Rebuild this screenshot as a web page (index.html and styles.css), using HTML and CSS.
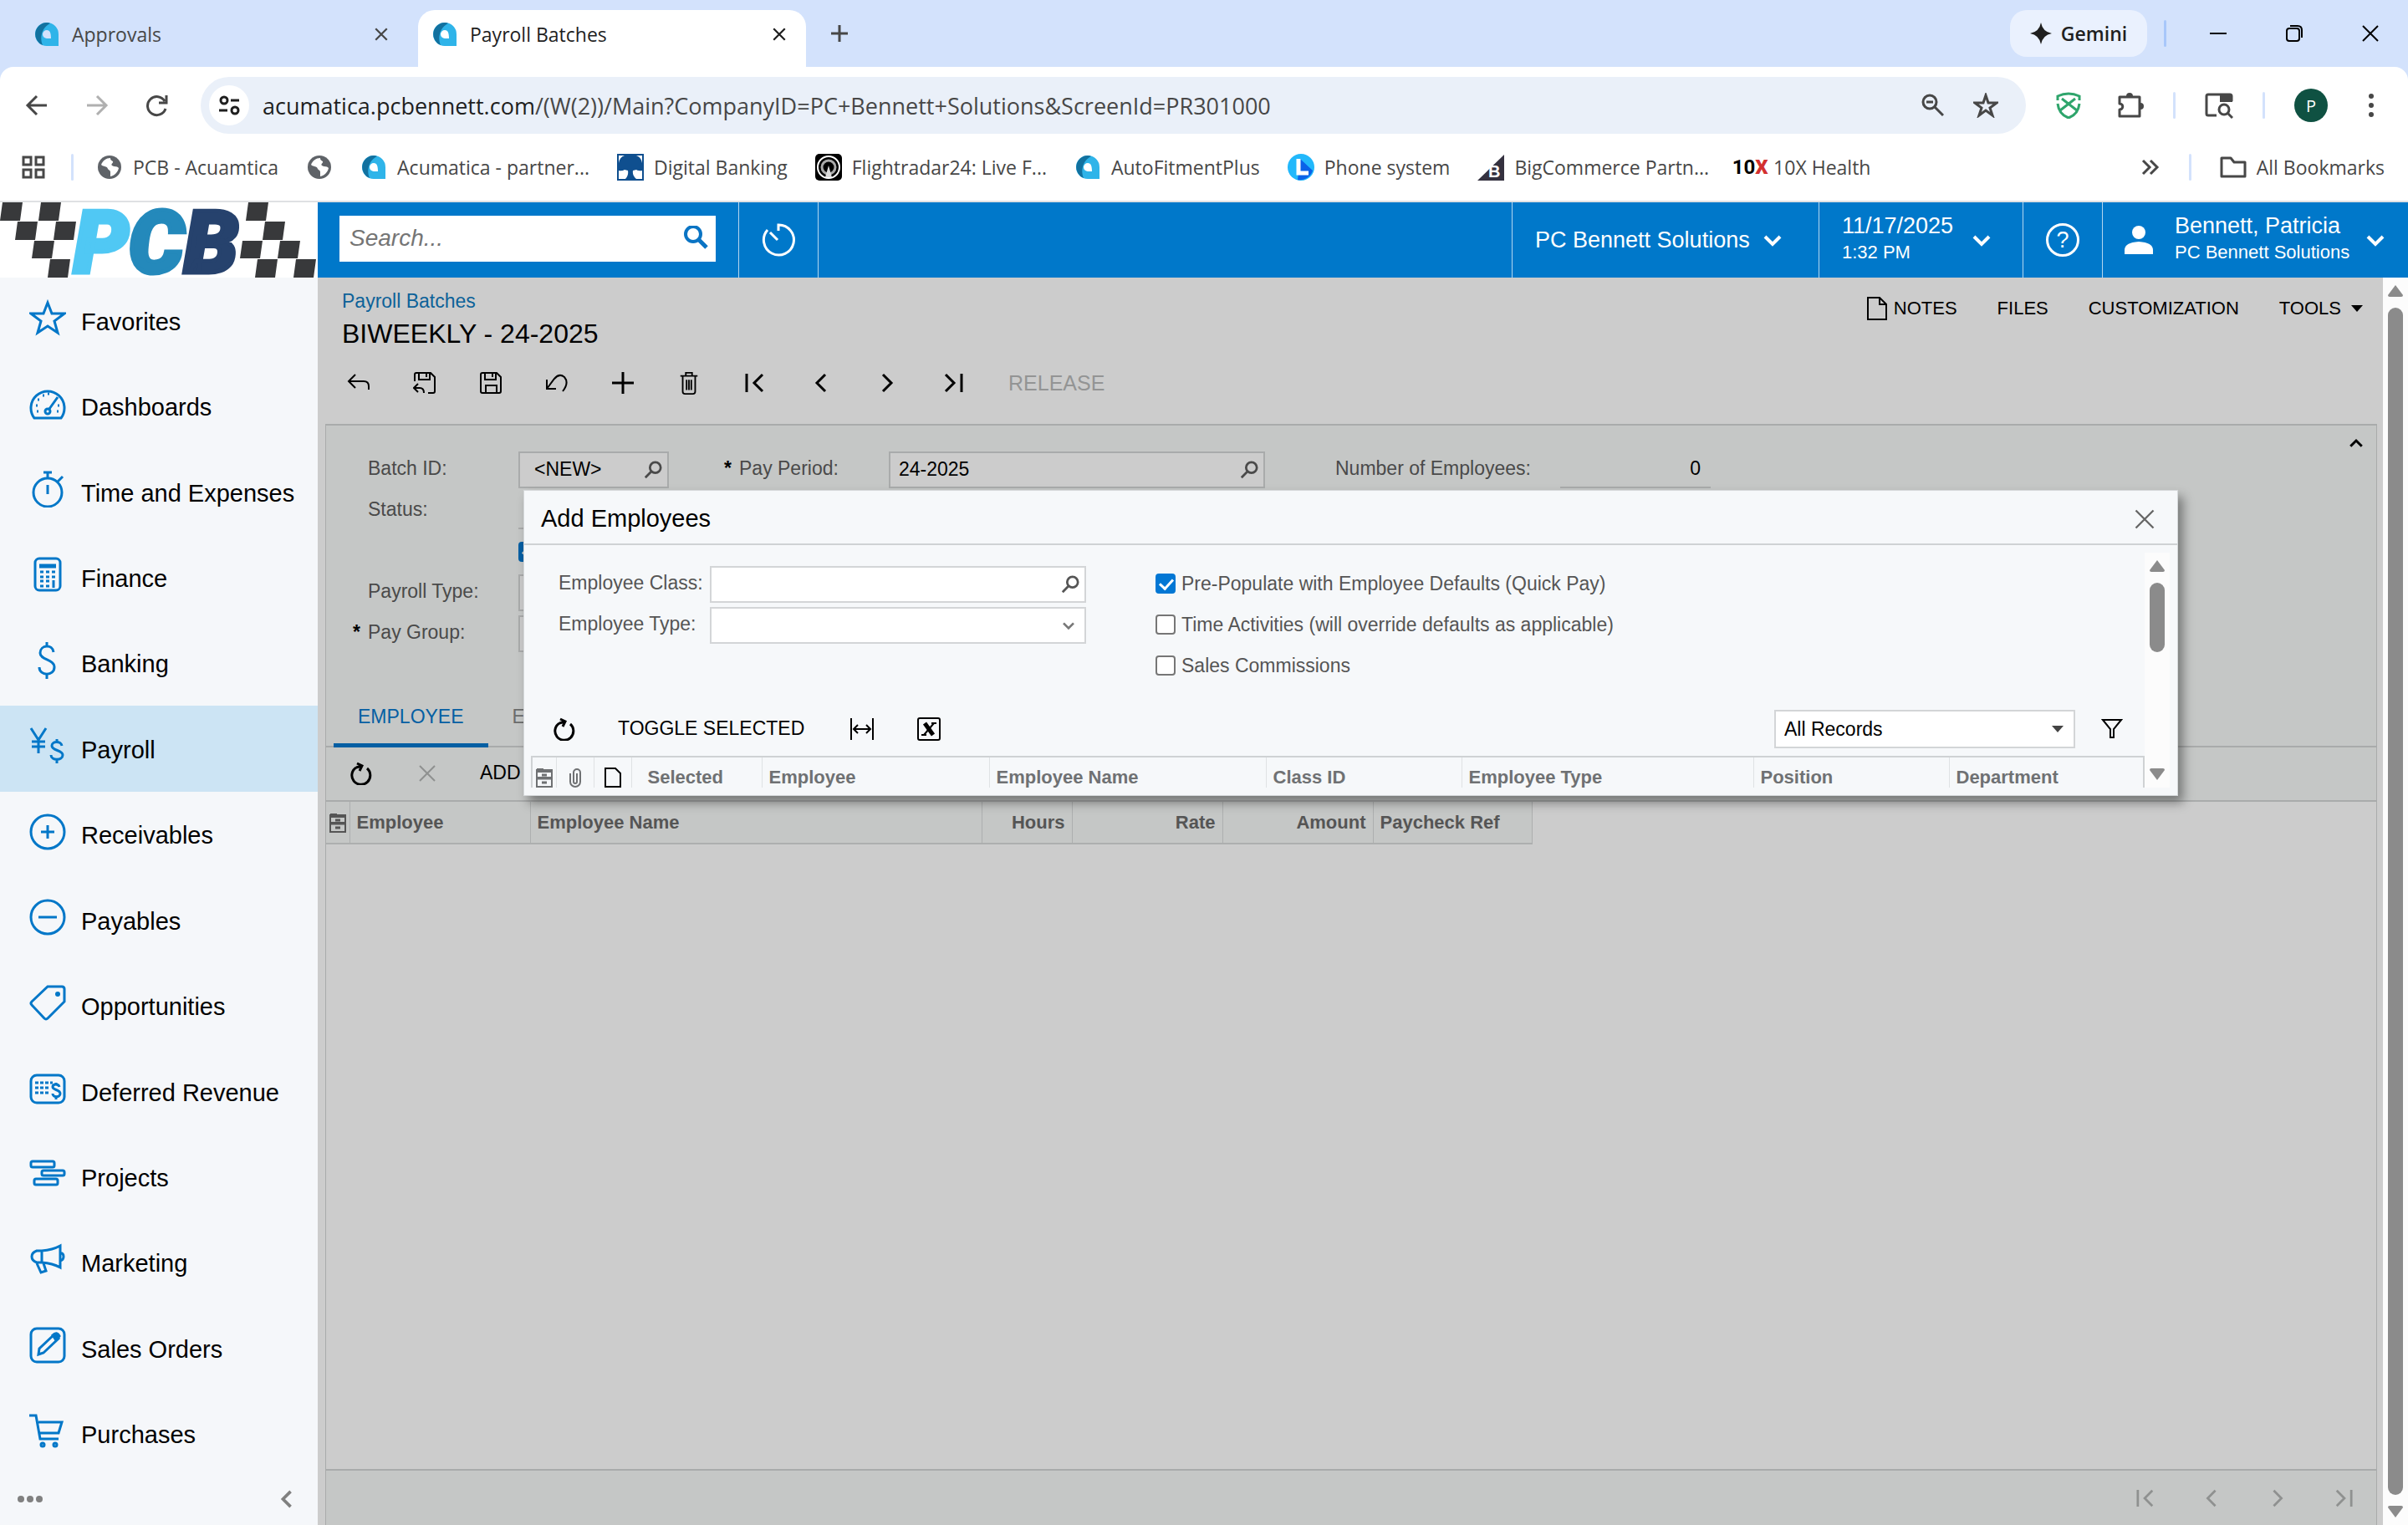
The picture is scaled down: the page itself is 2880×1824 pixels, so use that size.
FILE: index.html
```html
<!DOCTYPE html>
<html lang="en">
<head>
	<meta charset="utf-8">
	<title>Payroll Batches</title>
	<link rel="stylesheet" href="styles.css">
</head>
<body>
	<!-- shared icons -->
	<svg class="defs" width="0" height="0">
		<symbol id="acu" viewBox="0 0 28 28"><path d="M14 0A14 14 0 0 0 14 28H28V14A14 14 0 0 0 14 0ZM14 9c4 0 5 4 5 10h-5a5 5 0 0 1 0-10z" fill="#2fb4e9" fill-rule="evenodd"/><path d="M14 0A14 14 0 0 0 9 27c-4-9-1-21 9-26a14 14 0 0 0-4-1z" fill="#12719f"/></symbol>
		<symbol id="globe" viewBox="0 0 28 28"><circle cx="14" cy="14" r="14" fill="#5f6368"/><path d="M15 3c-5 0-9 3-11 8 3 3 7 1 8 5 1 2 3 1 3 4v5c5-1 9-5 10-10-3-3-5-1-8-3-2-2 2-3 1-5-1-1-3-1-3-4z" fill="#fff"/></symbol>
		<symbol id="x" viewBox="0 0 24 24"><path d="M3 3l18 18M21 3L3 21"/></symbol>
		<symbol id="down" viewBox="0 0 24 24"><path d="M3 8l9 9 9-9"/></symbol>
		<symbol id="prev" viewBox="0 0 24 24"><path d="M17 2L7 12l10 10"/></symbol>
		<symbol id="next" viewBox="0 0 24 24"><path d="M7 2l10 10L7 22"/></symbol>
		<symbol id="first" viewBox="0 0 24 24"><path d="M2 1v22M21 2L11 12l10 10"/></symbol>
		<symbol id="last" viewBox="0 0 24 24"><path d="M22 1v22M3 2l10 10L3 22"/></symbol>
		<symbol id="refresh" viewBox="0 0 28 28"><path d="M8 7a11 11 0 1 0 13 1M9 2l6 3-3 6M8 7l7-2"/></symbol>
		<symbol id="find" viewBox="0 0 24 24"><circle cx="15" cy="9" r="7"/><path d="M10 14l-8 8"/></symbol>
		<symbol id="drawer" viewBox="0 0 20 24"><path d="M1 3h18v20H1zM1 12h18"/><path d="M1 1h8v2h10v3H1z" fill="currentColor" stroke="none"/><path d="M7 9h6M7 18h6M1 13h18" stroke-width="3"/></symbol>
		<symbol id="dollar" viewBox="0 0 44 44"><path d="M29 12c-1-10-16-9-16 1 0 9 17 7 17 17 0 11-18 11-18 0M21 0v5M21 38v6"/></symbol>
		<symbol id="tri-up" viewBox="0 0 18 14"><path d="M9 0L18 12q0 2-2 2H2q-2 0-2-2z" fill="#8b8b8b"/></symbol>
		<symbol id="tri-down" viewBox="0 0 18 14"><path d="M9 14L18 2q0-2-2-2H2q-2 0-2 2z" fill="#8b8b8b"/></symbol>
	</svg>

	<div class="browser">
		<div class="tab-strip">
			<div class="tab">
				<svg class="fav"><use href="#acu"/></svg>
				<span class="tab-name">Approvals</span>
				<button class="tab-close" aria-label="Close tab"><svg class="i18"><use href="#x"/></svg></button>
			</div>
			<div class="tab active">
				<svg class="fav"><use href="#acu"/></svg>
				<span class="tab-name">Payroll Batches</span>
				<button class="tab-close" aria-label="Close tab"><svg class="i18"><use href="#x"/></svg></button>
			</div>
			<button class="new-tab" aria-label="New tab"><svg class="i24" viewBox="0 0 24 24"><path d="M12 2v20M2 12h20"/></svg></button>
			<button class="gemini"><svg viewBox="0 0 26 26"><path d="M13 0q2 11 13 13-11 2-13 13Q11 15 0 13 11 11 13 0z" fill="#1f1f1f" stroke="none"/></svg>Gemini</button>
			<span class="bar strong"></span>
			<div class="win-buttons">
				<button aria-label="Minimize"><svg class="i24 thin" viewBox="0 0 24 24"><path d="M2 12h20"/></svg></button>
				<button aria-label="Restore"><svg class="i24 thin" viewBox="0 0 24 24"><rect x="3" y="6" width="15" height="15" rx="3"/><path d="M7 3h9q5 0 5 5v9"/></svg></button>
				<button aria-label="Close"><svg class="i24 thin"><use href="#x"/></svg></button>
			</div>
		</div>

		<div class="address-row">
			<button class="nav" aria-label="Back"><svg class="i28" viewBox="0 0 28 28"><path d="M26 14H4M14 3L3 14l11 11"/></svg></button>
			<button class="nav off" aria-label="Forward"><svg class="i28" viewBox="0 0 28 28"><path d="M2 14h22M14 3l11 11-11 11"/></svg></button>
			<button class="nav" aria-label="Reload"><svg class="i28" viewBox="0 0 28 28"><path d="M24 18a11 11 0 1 1-1-9M25 2v9h-9"/></svg></button>
			<div class="omnibox">
				<span class="site-info"><svg class="i28" viewBox="0 0 28 28"><circle cx="8" cy="8" r="4"/><path d="M16 8h10M2 20h10"/><circle cx="21" cy="20" r="4"/></svg></span>
				<a class="url" href="#"><span>acumatica.pcbennett.com</span>/(W(2))/Main?CompanyID=PC+Bennett+Solutions&amp;ScreenId=PR301000</a>
				<button class="omni-btn" aria-label="Zoom"><svg class="i28" viewBox="0 0 28 28"><circle cx="11" cy="10" r="8"/><path d="M17 16l10 10M7 10h8"/></svg></button>
				<button class="omni-btn" aria-label="Bookmark"><svg class="i30" viewBox="0 0 30 30"><path d="M15 3l3 9h10l-8 6 3 9-8-6-8 6 3-9-8-6h10z"/></svg></button>
			</div>
			<div class="extensions">
				<button class="shield" aria-label="Shield"><svg class="i32" viewBox="0 0 32 32"><path d="M3 10V5q13-6 26 0v5M3 14c1 9 5 14 13 17 8-3 12-8 13-17M8 8l18 14M24 8L6 22"/></svg></button>
				<button aria-label="Extensions"><svg class="i32" viewBox="0 0 32 32"><path d="M3 6h24v23H3v-8c5 0 5-7 0-7z" stroke-linejoin="round"/><path d="M11 5a4 4 0 0 1 8 0zM28 13a4 4 0 0 1 0 8z" fill="currentColor" stroke="none"/></svg></button>
				<span class="bar"></span>
				<button aria-label="Lens"><svg class="i34" viewBox="0 0 34 34"><path d="M14 29H4q-2 0-2-2V6q0-2 2-2h26q2 0 2 2v6"/><path d="M18 4h15v9H18z" fill="currentColor" stroke="none"/><circle cx="23" cy="22" r="6"/><path d="M27 26l6 6"/></svg></button>
				<span class="bar"></span>
				<button class="avatar">P</button>
				<button class="dots" aria-label="Menu"><svg viewBox="0 0 8 30"><circle cx="4" cy="4" r="3"/><circle cx="4" cy="15" r="3"/><circle cx="4" cy="26" r="3"/></svg></button>
			</div>
		</div>

		<div class="bookmarks">
			<svg class="apps" viewBox="0 0 28 28"><path d="M2 2h9v9H2zM17 2h9v9h-9zM2 17h9v9H2zM17 17h9v9h-9z"/></svg>
			<span class="bar"></span>
			<a href="#"><svg class="fav"><use href="#globe"/></svg>PCB - Acuamtica</a>
			<a href="#" aria-label="Bookmark"><svg class="fav"><use href="#globe"/></svg></a>
			<a href="#"><svg class="fav"><use href="#acu"/></svg>Acumatica - partner...</a>
			<a href="#"><svg class="fav32" viewBox="0 0 32 32"><path d="M0 0h32v32H0z" fill="#0f4f8f"/><path d="M2 20q4 1 7-1l4 1q1 6-3 10H2zM30 20q-4 1-7-1l-4 1q-1 6 4 10h7zM2 2h7Q3 4 2 11zM30 2v9q-1-7-7-9z" fill="#fff"/></svg>Digital Banking</a>
			<a href="#"><svg class="fav32" viewBox="0 0 32 32"><rect width="32" height="32" rx="5" fill="#000"/><circle cx="16" cy="16" r="13" fill="none" stroke="#fff" stroke-width="2"/><circle cx="16" cy="16" r="8" fill="none" stroke="#aaa" stroke-width="3"/><path d="M16 14l4 14h-8z" fill="#ddd"/></svg>Flightradar24: Live F...</a>
			<a href="#"><svg class="fav"><use href="#acu"/></svg>AutoFitmentPlus</a>
			<a href="#"><svg class="fav32" viewBox="0 0 32 32"><circle cx="16" cy="16" r="16" fill="#22b8fb"/><path d="M15 6l15 14A16 16 0 0 1 12 31z" fill="#0a62e8"/><path d="M13 6v17h12" fill="none" stroke="#fff" stroke-width="5"/></svg>Phone system</a>
			<a href="#"><svg class="fav32" viewBox="0 0 32 32"><path d="M32 1v31H0z" fill="#34313f"/><text x="13" y="28" class="bc-mark">B</text></svg>BigCommerce Partn...</a>
			<a href="#"><span class="ten">10<b>X</b></span>10X Health</a>
			<div class="bookmarks-end">
				<button aria-label="More bookmarks"><svg class="i24" viewBox="0 0 24 24"><path d="M3 4l8 8-8 8M12 4l8 8-8 8"/></svg></button>
				<span class="bar"></span>
				<a href="#"><svg class="fav32 line" viewBox="0 0 32 32"><path d="M2 5h11l4 5h13v17H2z" stroke-linejoin="round"/></svg>All Bookmarks</a>
			</div>
		</div>
	</div>

	<div class="app">
		<aside class="sidebar">
			<svg class="logo" viewBox="0 0 380 90">
				<path fill="#38393b" d="M3 0h24l-3 22H0zM49 0h24l-3 22H46zM21 23h24l-3 22H18zM67 23h24l-3 22H64zM41 46h24l-3 21H38zM60 68h24l-3 22H57zM297 0h24l-3 22h-24zM317 23h24l-3 22h-24zM290 46h24l-3 21h-24zM335 46h24l-3 21h-24zM308 68h24l-3 22h-24zM354 68h24l-3 22h-24z"/>
				<text x="88" y="84" class="logo-text"><tspan class="logo-p">P</tspan><tspan class="logo-c">C</tspan><tspan class="logo-b">B</tspan></text>
			</svg>
			<nav class="menu">
				<a href="#"><svg viewBox="0 0 44 44"><path d="M22 4l5 13h15l-12 9 4 14-12-8-12 8 4-14-12-9h15z"/></svg>Favorites</a>
				<a href="#"><svg viewBox="0 0 44 44"><path d="M6 39A20 20 0 1 1 38 39zM6 39h32M24 28l10-14"/><circle cx="22" cy="31" r="3"/><path d="M9 31h2M8 24h2M10 17h2M16 12h2M22 10h2M33 31h2M34 24h2"/></svg>Dashboards</a>
				<a href="#"><svg viewBox="0 0 44 44"><circle cx="22" cy="26" r="17"/><path d="M22 17v11M22 3v6M17 2h10M34 13l6-6"/></svg>Time and Expenses</a>
				<a href="#"><svg viewBox="0 0 44 44"><rect x="7" y="3" width="30" height="38" rx="5"/><path d="M12 12h20" stroke-width="5"/><path d="M13 19h4M20 19h4M27 19h4M13 25h4M20 25h4M27 25h4M13 30h4M20 30h4M13 36h4M20 36h4M29 29v9"/></svg>Finance</a>
				<a href="#"><svg><use href="#dollar"/></svg>Banking</a>
				<a href="#" class="current"><svg viewBox="0 0 44 44"><path d="M2 1l9 14L20 1M11 15v16M3 17h16M3 23h16"/><path d="M39 22c-1-6-12-6-12 0 0 6 13 5 13 11 0 7-14 7-14 0M33 14v4M33 38v5"/></svg>Payroll</a>
				<a href="#"><svg viewBox="0 0 44 44"><circle cx="22" cy="22" r="20"/><path d="M22 14v16M14 22h16"/></svg>Receivables</a>
				<a href="#"><svg viewBox="0 0 44 44"><circle cx="22" cy="22" r="20"/><path d="M11 22h22"/></svg>Payables</a>
				<a href="#"><svg viewBox="0 0 44 44"><path d="M22 2h17q3 0 3 3v15L22 40q-2 2-4 0L3 24q-2-2 0-4z"/><circle cx="34" cy="11" r="3" fill="#0277c8" stroke="none"/></svg>Opportunities</a>
				<a href="#"><svg viewBox="0 0 44 44"><rect x="2" y="6" width="40" height="33" rx="7"/><path d="M7 15h4M13 15h4M19 15h4M25 15h3M7 21h4M13 21h4M19 21h4M7 27h4M13 27h4M19 27h4"/><path d="M36 20c-1-4-8-4-8 0 0 4 9 3 9 8 0 5-9 5-9 0M32 15v3M32 31v4"/></svg>Deferred Revenue</a>
				<a href="#"><svg viewBox="0 0 44 44"><rect x="2" y="7" width="28" height="7" rx="2"/><rect x="15" y="18" width="27" height="6" rx="2"/><rect x="6" y="28" width="28" height="7" rx="2"/></svg>Projects</a>
				<a href="#"><svg viewBox="0 0 44 44"><path d="M15 11H9q-6 2-6 7t6 7h6zM15 11q13-1 22-6v26q-9-5-22-6zM37 13q4 1 4 5t-4 5M9 26l5 11 6-2-3-9"/></svg>Marketing</a>
				<a href="#"><svg viewBox="0 0 44 44"><rect x="2" y="2" width="40" height="40" rx="7"/><path d="M11 33l1-7 18-17 5 5-18 17z"/><path d="M28 10q5-5 8 1l-4 5z" fill="#0277c8"/></svg>Sales Orders</a>
				<a href="#"><svg viewBox="0 0 44 44"><path d="M0 3h8l5 28h22M11 11h28l-4 13H13"/><circle cx="16" cy="38" r="2"/><circle cx="31" cy="38" r="2"/></svg>Purchases</a>
			</nav>
			<div class="sidebar-foot">
				<button aria-label="More items"><svg class="more" viewBox="0 0 30 8"><circle cx="4" cy="4" r="4"/><circle cx="15" cy="4" r="4"/><circle cx="26" cy="4" r="4"/></svg></button>
				<button aria-label="Collapse menu"><svg class="i22 bold"><use href="#prev"/></svg></button>
			</div>
		</aside>

		<div class="content">
			<header class="top-bar">
				<div class="search">
					<input type="search" placeholder="Search..." aria-label="Search">
					<svg class="i30" viewBox="0 0 30 30"><circle cx="11" cy="10" r="9"/><path d="M18 17l9 9" stroke-width="5"/></svg>
				</div>
				<button class="top-cell timer" aria-label="Recent"><svg viewBox="0 0 40 40"><path d="M7 8A18 18 0 1 0 20 2v7M10 11l9 9"/></svg></button>
				<button class="top-cell company">PC Bennett Solutions<svg class="i24"><use href="#down"/></svg></button>
				<button class="top-cell date"><span>11/17/2025<small>1:32 PM</small></span><svg class="i24"><use href="#down"/></svg></button>
				<button class="top-cell help" aria-label="Help"><span>?</span></button>
				<button class="top-cell user"><svg class="person" viewBox="0 0 34 34"><circle cx="17" cy="8" r="8"/><path d="M0 34v-5q0-9 17-10 17 1 17 10v5z"/></svg><span>Bennett, Patricia<small>PC Bennett Solutions</small></span><svg class="i24"><use href="#down"/></svg></button>
			</header>

			<div class="stage">
				<main class="page">
					<div class="page-head">
						<div>
							<a class="crumb" href="#">Payroll Batches</a>
							<h1>BIWEEKLY - 24-2025</h1>
						</div>
						<div class="page-links">
							<button><svg viewBox="0 0 24 28"><path d="M1 1h14l8 8v18H1zM15 1v8h8"/></svg>NOTES</button>
							<button>FILES</button>
							<button>CUSTOMIZATION</button>
							<button>TOOLS<i class="caret"></i></button>
						</div>
					</div>

					<div class="toolbar">
						<button aria-label="Back"><svg class="i28" viewBox="0 0 28 28"><path d="M10 4l-8 8 8 8M2 12h18q6 0 6 6v4"/></svg></button>
						<button aria-label="Save and close"><svg class="i28" viewBox="0 0 28 28"><path d="M2 12V4q0-2 2-2h17l5 5v17q0 2-2 2h-6M7 2v8h13V2M16 3v4M6 15l-5 5 5 5M1 20h7q5 0 5 6"/></svg></button>
						<button aria-label="Save"><svg class="i28" viewBox="0 0 28 28"><path d="M2 4q0-2 2-2h17l5 5v17q0 2-2 2H4q-2 0-2-2zM7 2v8h13V2M16 3v4M8 26v-9h13v9"/></svg></button>
						<button aria-label="Undo"><svg class="i28" viewBox="0 0 28 28"><path d="M2 10v11h11M2 21L11 9q6-7 12-2 6 7-2 17"/></svg></button>
						<button aria-label="Add"><svg class="i28 mid" viewBox="0 0 28 28"><path d="M14 1v26M1 14h26"/></svg></button>
						<button aria-label="Delete"><svg class="i28" viewBox="0 0 24 30"><path d="M1 6h22M8 5V2h8v3M4 7v19q0 3 3 3h10q3 0 3-3V7M9 11v13M12 11v13M15 11v13"/></svg></button>
						<button aria-label="First"><svg class="i24 mid"><use href="#first"/></svg></button>
						<button aria-label="Previous"><svg class="i24 mid"><use href="#prev"/></svg></button>
						<button aria-label="Next"><svg class="i24 mid"><use href="#next"/></svg></button>
						<button aria-label="Last"><svg class="i24 mid"><use href="#last"/></svg></button>
						<button class="release" disabled>RELEASE</button>
					</div>

					<section class="panel">
						<div class="form">
							<div class="form-col first-col">
								<label for="batch">Batch ID:</label>
								<div class="field"><input id="batch" type="text" value="&lt;NEW&gt;"><svg class="i22"><use href="#find"/></svg></div>
								<label for="status">Status:</label>
								<input id="status" class="flat" type="text">
								<span></span>
								<input class="check dim" type="checkbox" checked aria-label="Hold">
								<label for="ptype">Payroll Type:</label>
								<div class="field"><input id="ptype" type="text"></div>
								<label for="pgroup"><b>*</b>Pay Group:</label>
								<div class="field"><input id="pgroup" type="text"></div>
							</div>
							<div class="form-col second-col">
								<label for="period"><b>*</b>Pay Period:</label>
								<div class="field"><input id="period" type="text" value="24-2025"><svg class="i22"><use href="#find"/></svg></div>
							</div>
							<div class="form-col third-col">
								<label for="count">Number of Employees:</label>
								<input id="count" class="flat" type="text" value="0">
							</div>
							<button class="collapse" aria-label="Collapse form"><svg class="i18 bold" viewBox="0 0 24 24"><path d="M3 17l9-9 9 9"/></svg></button>
						</div>

						<div class="tabs">
							<button class="selected">EMPLOYEE</button>
							<button>EARN</button>
						</div>

						<div class="grid-tools">
							<button aria-label="Refresh"><svg class="i28 mid"><use href="#refresh"/></svg></button>
							<button disabled aria-label="Delete row"><svg class="i24"><use href="#x"/></svg></button>
							<button class="text-btn">ADD</button>
						</div>

						<table class="grid batch-grid">
							<colgroup><col class="w28"><col class="w216"><col class="w540"><col class="w108"><col class="w180"><col class="w180"><col class="w190"></colgroup>
							<tr>
								<th class="icon-col"><svg><use href="#drawer"/></svg></th>
								<th>Employee</th>
								<th>Employee Name</th>
								<th class="num">Hours</th>
								<th class="num">Rate</th>
								<th class="num">Amount</th>
								<th>Paycheck Ref</th>
							</tr>
						</table>

						<div class="pager">
							<button disabled aria-label="First page"><svg class="i22 mid"><use href="#first"/></svg></button>
							<button disabled aria-label="Previous page"><svg class="i22 mid"><use href="#prev"/></svg></button>
							<button disabled aria-label="Next page"><svg class="i22 mid"><use href="#next"/></svg></button>
							<button disabled aria-label="Last page"><svg class="i22 mid"><use href="#last"/></svg></button>
						</div>
					</section>
				</main>

				<div class="scroll page-scroll"><svg><use href="#tri-up"/></svg><i></i><svg><use href="#tri-down"/></svg></div>

				<div class="dialog" role="dialog" aria-labelledby="dlg-title">
					<div class="dialog-head">
						<h2 id="dlg-title">Add Employees</h2>
						<button aria-label="Close"><svg class="i28"><use href="#x"/></svg></button>
					</div>
					<div class="dialog-body">
						<div class="dialog-main">
							<div class="filters">
								<div class="filter-fields">
									<label for="eclass">Employee Class:</label>
									<div class="field white"><input id="eclass" type="text"><svg class="i22"><use href="#find"/></svg></div>
									<label for="etype">Employee Type:</label>
									<div class="field white"><select id="etype"><option></option></select><svg class="arrow"><use href="#down"/></svg></div>
								</div>
								<div class="filter-checks">
									<label><input class="check" type="checkbox" checked>Pre-Populate with Employee Defaults (Quick Pay)</label>
									<label><input class="check" type="checkbox">Time Activities (will override defaults as applicable)</label>
									<label><input class="check" type="checkbox">Sales Commissions</label>
								</div>
							</div>
							<div class="dialog-tools">
								<button aria-label="Refresh"><svg class="i28 mid"><use href="#refresh"/></svg></button>
								<button class="text-btn">TOGGLE SELECTED</button>
								<button aria-label="Fit columns"><svg class="i28" viewBox="0 0 28 28"><path d="M1 1v26M27 1v26M4 14h20M9 9l-5 5 5 5M19 9l5 5-5 5"/></svg></button>
								<button aria-label="Export to Excel"><svg class="i28" viewBox="0 0 28 28"><rect x="1" y="1" width="26" height="26" rx="2"/><path d="M9 7l10 14" stroke-width="5"/><path d="M20 7L8 21M17 7h6M5 21h6"/></svg></button>
								<div class="field white records"><select aria-label="Records"><option>All Records</option></select><i class="caret"></i></div>
								<button class="funnel" aria-label="Filter"><svg viewBox="0 0 26 24"><path d="M2 1h22l-9 11v10h-4V12z"/></svg></button>
							</div>
							<table class="grid dialog-grid">
								<colgroup><col class="w29"><col class="w45"><col class="w45"><col class="w156"><col class="w272"><col class="w331"><col class="w234"><col class="w349"><col class="w234"><col></colgroup>
								<tr>
									<th class="icon-col"><svg><use href="#drawer"/></svg></th>
									<th class="icon-col"><svg viewBox="0 0 20 24"><path d="M4 7v10a6 6 0 0 0 12 0V6a4 4 0 0 0-8 0v11a2 2 0 0 0 4 0V7"/></svg></th>
									<th class="icon-col"><svg class="dark" viewBox="0 0 20 24"><path d="M1 1h12l6 6v16H1z"/></svg></th>
									<th class="inset">Selected</th>
									<th>Employee</th>
									<th>Employee Name</th>
									<th>Class ID</th>
									<th>Employee Type</th>
									<th>Position</th>
									<th>Department</th>
								</tr>
							</table>
						</div>
						<div class="scroll dialog-scroll"><svg><use href="#tri-up"/></svg><i></i><svg><use href="#tri-down"/></svg></div>
					</div>
				</div>
			</div>
		</div>
	</div>
</body>
</html>
```
FILE: styles.css
```css
* {
	box-sizing: border-box;
}

body {
	margin: 0;
	height: 100vh;
	display: flex;
	flex-direction: column;
	overflow: hidden;
	font-family: "Liberation Sans", Arial, sans-serif;
	font-size: 23px;
	color: #000;
}

button, input, select {
	font: inherit;
	color: inherit;
	background: none;
	border: none;
	padding: 0;
	margin: 0;
	outline: none;
}

button {
	display: flex;
	align-items: center;
	justify-content: center;
	white-space: nowrap;
	cursor: pointer;
}

a {
	color: inherit;
	text-decoration: none;
}

svg {
	flex: none;
	fill: none;
	stroke: currentColor;
	stroke-width: 2;
}

.defs {
	position: absolute;
}

#acu, #globe, #tri-up, #tri-down {
	stroke: none;
}

.i18 { width: 18px; height: 18px; }
.i22 { width: 22px; height: 22px; }
.i24 { width: 24px; height: 24px; }
.i28 { width: 28px; height: 28px; }
.i30 { width: 30px; height: 30px; }
.i32 { width: 32px; height: 32px; }
.i34 { width: 34px; height: 34px; }
.mid { stroke-width: 3; }
.bold { stroke-width: 4; }

/* browser */
.browser {
	flex: none;
	background: #d3e2fc;
	border-bottom: 2px solid #dfe1e3;
	font-family: "Open Sans", "Noto Sans", sans-serif;
	color: #474747;
}

.browser svg {
	stroke-width: 3;
}

.browser .thin {
	stroke-width: 2;
}

.browser .fav, .browser .fav32 {
	stroke: none;
}

.browser .line {
	stroke: currentColor;
}

.fav {
	width: 28px;
	height: 28px;
	margin: 0 2px;
}

.fav32 {
	width: 32px;
	height: 32px;
}

.tab-strip {
	height: 80px;
	padding: 12px 0 0 20px;
	display: flex;
}

.tab {
	width: 464px;
	height: 68px;
	padding: 0 16px 10px 20px;
	display: flex;
	align-items: center;
	gap: 14px;
}

.tab + .tab {
	margin-left: 16px;
}

.tab.active {
	padding-left: 16px;
	padding-right: 20px;
	background: #fff;
	border-radius: 20px 20px 0 0;
	color: #1f1f1f;
}

.tab-name {
	flex: 1;
}

.tab-close {
	width: 24px;
	height: 24px;
}

.new-tab {
	width: 56px;
	height: 56px;
	margin-left: 12px;
}

.gemini {
	width: 164px;
	height: 56px;
	margin: 0 20px 0 auto;
	gap: 11px;
	border-radius: 20px;
	background: #eaf1fe;
	color: #1f1f1f;
	font-weight: 600;
}

.gemini svg {
	width: 26px;
	height: 26px;
}

.bar {
	flex: none;
	width: 3px;
	height: 32px;
	border-radius: 2px;
	background: #d3e2fc;
}

.bar.strong {
	margin-top: 12px;
	background: #a8c7fa;
}

.win-buttons {
	display: flex;
	margin-left: 16px;
	color: #000;
}

.win-buttons button {
	width: 91px;
	height: 56px;
}

.address-row {
	height: 80px;
	padding: 12px 8px 0;
	display: flex;
	align-items: center;
	background: #fff;
	border-radius: 16px 16px 0 0;
}

.nav {
	width: 72px;
	height: 68px;
}

.nav.off {
	color: #b0b0b0;
}

.omnibox {
	flex: 1;
	height: 68px;
	margin-left: 16px;
	padding: 0 16px 0 10px;
	display: flex;
	align-items: center;
	border-radius: 34px;
	background: #eaf0f9;
}

.site-info {
	width: 48px;
	height: 48px;
	display: flex;
	align-items: center;
	justify-content: center;
	border-radius: 50%;
	background: #fff;
	color: #1f1f1f;
}

.url {
	flex: 1;
	margin-left: 16px;
	font-size: 27px;
	white-space: nowrap;
}

.url span {
	color: #1f1f1f;
}

.omni-btn {
	width: 64px;
	height: 64px;
}

.extensions {
	padding: 0 32px 0 35px;
	display: flex;
	align-items: center;
	gap: 35px;
}

.shield {
	margin-right: 7px;
	color: #2fa56c;
}

.avatar {
	width: 40px;
	height: 40px;
	margin-right: 13px;
	border-radius: 50%;
	background: #0f5142;
	color: #fff;
	font-size: 20px;
}

.dots svg {
	width: 8px;
	height: 30px;
	fill: currentColor;
	stroke: none;
}

.bookmarks {
	height: 80px;
	padding: 0 28px 0 26px;
	display: flex;
	align-items: center;
	gap: 33px;
	background: #fff;
}

.bookmarks > .bar {
	margin: 0 -6px 0 -2px;
}

.bookmarks a {
	display: flex;
	align-items: center;
	gap: 12px;
	white-space: nowrap;
}

.apps {
	width: 28px;
	height: 28px;
}

.bc-mark {
	font: bold 20px "Liberation Sans", Arial, sans-serif;
	fill: #fff;
}

.ten {
	width: 32px;
	font: bold 24px Roboto, sans-serif;
	color: #000;
	display: flex;
	justify-content: center;
}

.ten b {
	color: #d3302f;
}

.bookmarks-end {
	margin-left: auto;
	display: flex;
	align-items: center;
	gap: 34px;
}

/* left menu */
.app {
	flex: 1;
	display: flex;
	min-height: 0;
}

.sidebar {
	width: 380px;
	flex: none;
	display: flex;
	flex-direction: column;
	background: #f5f7fa;
}

.logo {
	width: 380px;
	height: 90px;
	background: #fff;
	stroke: none;
	overflow: visible;
}

.logo-text {
	font: italic 900 104px Roboto, sans-serif;
	stroke-width: 5px;
}

.logo-p { fill: #50c8f4; stroke: #50c8f4; }
.logo-c { fill: #2489bb; stroke: #2489bb; }
.logo-b { fill: #26426d; stroke: #26426d; }

.menu {
	flex: 1;
	display: flex;
	flex-direction: column;
	font-size: 29px;
}

.menu a {
	flex: 1;
	padding: 4px 0 0 35px;
	display: flex;
	align-items: center;
	gap: 18px;
}

.menu a.current {
	background: #cce4f4;
}

.menu svg {
	width: 44px;
	height: 44px;
	margin-bottom: 10px;
	color: #0277c8;
	stroke-width: 3;
}

.sidebar-foot {
	height: 58px;
	padding: 0 26px 4px 20px;
	display: flex;
	align-items: center;
	justify-content: space-between;
	color: #808080;
}

.sidebar-foot .more {
	width: 32px;
	height: 8px;
	fill: currentColor;
	stroke: none;
}

/* blue bar */
.content {
	flex: 1;
	min-width: 0;
	display: flex;
	flex-direction: column;
}

.top-bar {
	height: 90px;
	flex: none;
	display: flex;
	align-items: center;
	background: #0078ca;
	color: #fff;
}

.search {
	width: 450px;
	height: 55px;
	margin: 0 27px 4px 26px;
	padding: 0 8px 0 12px;
	display: flex;
	align-items: center;
	background: #fff;
	color: #0a74c4;
}

.search svg {
	stroke-width: 4;
}

.search input {
	flex: 1;
	min-width: 0;
	font-size: 28px;
	color: #000;
}

.search input::placeholder {
	font-style: italic;
	color: #757575;
}

.top-cell {
	height: 90px;
	border-left: 1px solid #b3d6ef;
	font-size: 27px;
	text-align: left;
}

.top-cell .i24 {
	stroke-width: 4;
}

.top-cell span {
	margin-bottom: 2px;
}

.top-cell small {
	display: block;
	font-size: 22px;
	line-height: 32px;
}

.timer {
	width: 96px;
	border-right: 1px solid #b3d6ef;
}

.timer svg {
	width: 40px;
	height: 40px;
	stroke-width: 3;
}

.company {
	width: 367px;
	margin-left: auto;
	padding: 0 43px 0 27px;
	justify-content: space-between;
}

.date {
	width: 244px;
	padding: 0 37px 0 27px;
	justify-content: space-between;
}

.help {
	width: 95px;
}

.help span {
	width: 40px;
	height: 40px;
	margin: 0;
	border: 3px solid #fff;
	border-radius: 50%;
	line-height: 34px;
	text-align: center;
}

.user {
	width: 366px;
	padding: 0 27px 0 26px;
	justify-content: flex-start;
	gap: 26px;
}

.user > span {
	flex: 1;
}

.user .i24 {
	margin-left: -20px;
}

.person {
	width: 34px;
	height: 34px;
	fill: #fff;
	stroke: none;
}

/* page */
.stage {
	flex: 1;
	min-height: 0;
	position: relative;
	display: flex;
}

.page {
	flex: 1;
	min-width: 0;
	padding: 13px 7px 0 9px;
	display: flex;
	flex-direction: column;
	background: #ccc;
}

.page-head {
	padding-left: 20px;
	display: flex;
	justify-content: space-between;
}

.crumb {
	display: block;
	line-height: 30px;
	color: #0d6299;
}

h1 {
	margin: 0;
	font-size: 32px;
	font-weight: normal;
	line-height: 48px;
}

.page-links {
	height: 48px;
	margin-right: 17px;
	display: flex;
	align-items: center;
	gap: 48px;
	font-size: 22px;
}

.page-links button {
	gap: 8px;
}

.page-links svg {
	width: 24px;
	height: 28px;
}

.caret {
	border: 7px solid transparent;
	border-top: 8px solid currentColor;
	border-bottom: none;
}

.page-links .caret {
	margin-left: 4px;
}

.toolbar {
	height: 70px;
	margin-bottom: 14px;
	flex: none;
	display: flex;
}

.toolbar button, .grid-tools button, .pager button {
	width: 79px;
}

.toolbar .release {
	width: auto;
	padding-left: 27px;
	font-size: 25px;
	color: #939494;
}

.panel {
	flex: 1;
	min-height: 0;
	display: flex;
	flex-direction: column;
	border: 2px solid #a9abab;
	border-width: 2px 1px 0 1px;
}

.form {
	height: 317px;
	flex: none;
	padding: 28px 15px 0 30px;
	display: flex;
	align-items: flex-start;
	background: #c5c7c6;
	color: #4a4a4a;
}

.form-col {
	display: grid;
	grid-auto-rows: 49px;
	align-items: center;
	margin-right: 64px;
}

.first-col { grid-template-columns: 200px 180px; }
.second-col { grid-template-columns: 199px 450px; }
.third-col { grid-template-columns: 289px 180px; }

.form label {
	padding: 0 0 2px 20px;
	white-space: nowrap;
}

.form label b {
	display: inline-block;
	width: 20px;
	margin-left: -20px;
	padding-left: 2px;
	color: #000;
}

.field {
	height: 44px;
	padding: 0 6px 0 10px;
	display: flex;
	align-items: center;
	border: 2px solid #a9abab;
	background: #ccc;
}

.field .i22 {
	stroke-width: 3;
}

.field input, .field select {
	flex: 1;
	min-width: 0;
	appearance: none;
	color: #000;
}

.first-col .field {
	padding-left: 17px;
}

.flat {
	width: 180px;
	height: 44px;
	padding-right: 12px;
	border-bottom: 2px solid #a9abab;
	text-align: right;
	color: #000;
}

.collapse {
	margin-left: auto;
	margin-top: -16px;
	color: #000;
}

.check {
	appearance: none;
	flex: none;
	width: 24px;
	height: 24px;
	border: 2px solid #767676;
	border-radius: 4px;
	background: #fff;
}

.check:checked {
	border-color: #0277d4;
	background: #0277d4;
}

.check:checked::after {
	content: "";
	display: block;
	width: 7px;
	height: 13px;
	margin: 1px 6px;
	border: solid #fff;
	border-width: 0 3px 3px 0;
	transform: rotate(42deg);
}

.check.dim {
	border-color: #055fa3;
	background: #055fa3;
}

.check.dim::after {
	border-color: #ccc;
}

.tabs {
	height: 68px;
	flex: none;
	padding-left: 9px;
	display: flex;
	background: #c5c7c6;
	border-bottom: 2px solid #a9abab;
	color: #6b6c6c;
}

.tabs button {
	height: 68px;
	padding: 0 29px;
	border-bottom: 5px solid transparent;
}

.tabs .selected {
	color: #055fa3;
	border-color: #055fa3;
}

.grid-tools {
	height: 65px;
	flex: none;
	padding: 0 0 2px 2px;
	display: flex;
	background: #c5c7c6;
	border-bottom: 2px solid #a9abab;
}

.grid-tools button:disabled, .pager button:disabled {
	color: #8f9190;
}

.grid-tools .text-btn {
	width: auto;
	padding-left: 24px;
}

.grid {
	table-layout: fixed;
	border-collapse: collapse;
	color: #555;
}

.grid th {
	height: 50px;
	padding: 0 8px;
	border-right: 1px solid #adafaf;
	font-size: 22px;
	text-align: left;
	white-space: nowrap;
}

.grid .num {
	text-align: right;
}

.grid .inset {
	padding-left: 19px;
}

.grid .icon-col {
	padding: 0;
	text-align: center;
}

.grid svg {
	display: block;
	width: 20px;
	height: 24px;
	margin: 0 auto;
}

.batch-grid {
	width: 1442px;
	background: #c5c7c6;
	border-bottom: 2px solid #adafaf;
}

.w28 { width: 28px; }
.w29 { width: 29px; }
.w45 { width: 45px; }
.w108 { width: 108px; }
.w156 { width: 156px; }
.w180 { width: 180px; }
.w190 { width: 190px; }
.w216 { width: 216px; }
.w234 { width: 234px; }
.w272 { width: 272px; }
.w331 { width: 331px; }
.w349 { width: 349px; }
.w540 { width: 540px; }

.pager {
	height: 67px;
	margin-top: auto;
	display: flex;
	justify-content: flex-end;
	background: #c5c7c6;
	border-top: 2px solid #a9abab;
}

/* scroll bars */
.scroll {
	width: 30px;
	flex: none;
	display: flex;
	flex-direction: column;
	align-items: center;
	background: #fcfcfc;
}

.scroll svg {
	width: 18px;
	height: 14px;
	stroke: none;
}

.scroll i {
	width: 18px;
	border-radius: 9px;
	background: #8b8b8b;
}

.page-scroll {
	padding: 9px 0;
	gap: 13px;
}

.page-scroll i {
	flex: 1;
}

.dialog-scroll {
	padding: 9px 0;
	gap: 13px;
}

.dialog-scroll i {
	height: 83px;
	margin-bottom: auto;
}

/* dialog */
.dialog {
	position: absolute;
	top: 254px;
	left: 246px;
	right: 275px;
	border: 1px solid #d5d8da;
	background: #f6f8fa;
	box-shadow: 6px 8px 12px 0 rgba(0, 0, 0, 0.4);
}

.dialog-head {
	height: 65px;
	padding: 4px 25px 0 20px;
	display: flex;
	align-items: center;
	justify-content: space-between;
	border-bottom: 2px solid #cfd2d4;
}

.dialog-head button {
	color: #666;
}

h2 {
	margin: 0;
	font-size: 29px;
	font-weight: normal;
}

.dialog-body {
	height: 299px;
	padding: 9px 9px 9px 8px;
	display: flex;
}

.dialog-main {
	flex: 1;
	min-width: 0;
	overflow: hidden;
}

.filters {
	padding: 13px 0 0 33px;
	display: flex;
	gap: 83px;
	color: #555;
}

.filter-fields {
	display: grid;
	grid-template-columns: 181px 450px;
	grid-auto-rows: 49px;
	align-items: center;
	white-space: nowrap;
}

.filter-fields label {
	padding-bottom: 2px;
}

.white {
	background: #fff;
	border-color: #d3d5d7;
}

.arrow {
	width: 16px;
	height: 16px;
	margin-right: 5px;
	stroke-width: 4;
	color: #777;
}

.filter-checks label {
	height: 49px;
	padding-bottom: 1px;
	display: flex;
	align-items: center;
	gap: 7px;
}

.dialog-tools {
	height: 83px;
	padding: 18px 13px 0 13px;
	display: flex;
	align-items: center;
}

.dialog-tools button {
	width: 54px;
	margin-right: 26px;
}

.dialog-tools .text-btn {
	width: auto;
	padding: 0 13px 0 11px;
	margin-right: 29px;
}

.dialog-tools .records {
	width: 360px;
	height: 46px;
	margin-left: auto;
	padding-right: 12px;
}

.records .caret {
	color: #444;
}

.dialog-tools .funnel {
	width: 26px;
	margin: 0 13px 0 31px;
}

.funnel svg {
	width: 26px;
	height: 24px;
}

.dialog-grid {
	width: 100%;
	border: 2px solid #cfd2d4;
	color: #6f7173;
}

.dialog-grid th {
	border-color: #dfe2e4;
}

.dark {
	color: #000;
}
```
